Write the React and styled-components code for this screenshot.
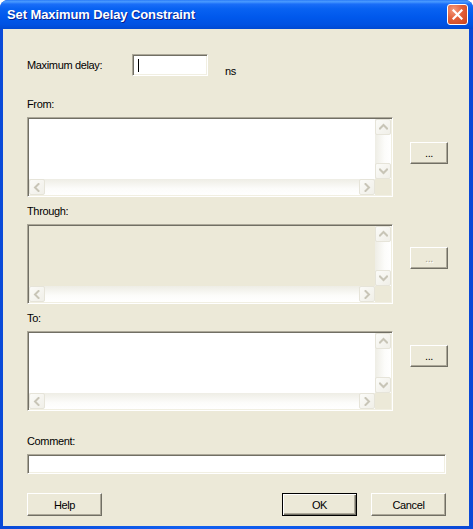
import React from 'react'
import styled, { createGlobalStyle, css } from 'styled-components'

const GlobalStyle = createGlobalStyle`
  html, body {
    margin: 0;
    padding: 0;
    background: #ffffff;
  }
  * {
    box-sizing: border-box;
  }
`

const font = css`
  font-family: 'Liberation Sans', Arial, sans-serif;
  font-size: 11px;
  letter-spacing: -0.35px;
  color: #000;
`

// Window frame
const Window = styled.div`
  width: 473px;
  height: 529px;
  display: flex;
  flex-direction: column;
  border-radius: 8px 8px 0 0;
  overflow: hidden;
  background: linear-gradient(to right, #0a4ad8, #1160f0 40%, #0e5aec 60%, #0a48d6);
`

const TitleBar = styled.div`
  height: 29px;
  flex: none;
  display: flex;
  align-items: center;
  justify-content: space-between;
  padding: 0 5px 1px 7px;
  background: linear-gradient(
    180deg,
    #2b7cf7 0%,
    #4a9bff 6%,
    #1a6ef8 14%,
    #0862f2 30%,
    #0058ec 60%,
    #0052e2 85%,
    #0049d2 100%
  );
`

const Title = styled.span`
  font-family: 'Liberation Sans', Arial, sans-serif;
  font-weight: bold;
  font-size: 13px;
  letter-spacing: -0.1px;
  color: #ffffff;
  text-shadow: 1px 1px 0 #0a1e8c;
`

const CloseButton = styled.div`
  width: 21px;
  height: 21px;
  border: 1px solid #ffffff;
  border-radius: 3px;
  background: radial-gradient(circle at 30% 25%, #f49a7c 0%, #e2603a 45%, #c9421c 100%);
  display: flex;
  align-items: center;
  justify-content: center;
`

const Body = styled.div`
  flex: 1;
  margin: 0 4px 3px 3px;
  background: #ece9d8;
  padding: 25px 21px 0 24px;
  display: flex;
  flex-direction: column;
`

// Fields
const sunken = css`
  border: 1px solid;
  border-color: #aca899 #ffffff #ffffff #aca899;
  box-shadow: inset 1px 1px 0 #716f64, inset -1px -1px 0 #f1efe2;
`

const DelayRow = styled.div`
  display: flex;
  align-items: center;
  height: 22px;
`

const Label = styled.div`
  ${font};
  line-height: 14px;
  height: 14px;
`

const DelayLabel = styled(Label)`
  width: 105px;
`

const TextField = styled.div`
  ${sunken};
  background: #ffffff;
  width: ${p => (p.$width ? `${p.$width}px` : 'auto')};
  height: ${p => p.$height}px;
  margin-right: ${p => p.$inset || 0}px;
  display: flex;
  align-items: center;
  padding-left: 5px;
`

const Caret = styled.span`
  width: 1px;
  height: 13px;
  background: #000;
`

const Units = styled(Label)`
  margin-left: 17px;
  align-self: flex-start;
  margin-top: 10px;
`

const Section = styled.div`
  margin-top: ${p => p.$top}px;
  display: flex;
  flex-direction: column;
  gap: 6px;
`

const ListRow = styled.div`
  display: flex;
  align-items: flex-start;
  gap: 17px;
`

const ListBox = styled.div`
  ${sunken};
  flex: 1;
  height: 80px;
  padding: 1px;
  display: grid;
  grid-template-columns: 1fr 16px;
  grid-template-rows: 1fr 16px;
`

const ListContent = styled.div`
  background: ${p => (p.$disabled ? '#ece9d8' : '#ffffff')};
`

const VScroll = styled.div`
  display: flex;
  flex-direction: column;
  justify-content: space-between;
  background: linear-gradient(to right, #eeede5, #fcfcfa 60%, #ffffff);
`

const HScroll = styled.div`
  display: flex;
  justify-content: space-between;
  background: linear-gradient(to bottom, #eeede5, #fcfcfa 60%, #ffffff);
`

const Corner = styled.div`
  background: #ece9d8;
`

const ScrollButton = styled.div`
  width: 16px;
  height: 16px;
  border: 1px solid #e6e4d9;
  border-radius: 2px;
  background: linear-gradient(135deg, #fbfbf8, #f0efe8);
  display: flex;
  align-items: center;
  justify-content: center;
`

const Button = styled.div`
  ${font};
  width: ${p => p.$width}px;
  height: ${p => p.$height}px;
  margin-top: ${p => p.$top || 0}px;
  flex: none;
  display: flex;
  align-items: center;
  justify-content: center;
  background: #ece9d8;
  color: ${p => (p.$disabled ? '#aca899' : '#000')};
  text-shadow: ${p => (p.$disabled ? '1px 1px 0 #ffffff' : 'none')};
  border: 1px solid;
  border-color: ${p => (p.$default ? '#000 #000 #000 #000' : '#ffffff #716f64 #716f64 #ffffff')};
  box-shadow: ${p =>
    p.$default
      ? 'inset 1px 1px 0 #ffffff, inset -1px -1px 0 #716f64, inset -2px -2px 0 #aca899'
      : 'inset -1px -1px 0 #aca899'};
`

const ButtonRow = styled.div`
  margin-top: 19px;
  margin-right: 2px;
  display: flex;
  gap: 14px;
`

const Spacer = styled.div`
  flex: 1;
`

const arrows = {
  up: '1,5.5 4.5,2 8,5.5',
  down: '1,2.5 4.5,6 8,2.5',
  left: '5.5,1 2,4.5 5.5,8',
  right: '2.5,1 6,4.5 2.5,8',
}

const Arrow = ({ dir }) => (
  <svg width="9" height="9" viewBox="0 0 9 9">
    <polyline points={arrows[dir]} fill="none" stroke="#c8c5b7" strokeWidth="2" strokeLinecap="square" />
  </svg>
)

const List = ({ disabled }) => (
  <ListBox>
    <ListContent $disabled={disabled} />
    <VScroll>
      <ScrollButton><Arrow dir="up" /></ScrollButton>
      <ScrollButton><Arrow dir="down" /></ScrollButton>
    </VScroll>
    <HScroll>
      <ScrollButton><Arrow dir="left" /></ScrollButton>
      <ScrollButton><Arrow dir="right" /></ScrollButton>
    </HScroll>
    <Corner />
  </ListBox>
)

const sections = [
  { label: 'From:', top: 21, button: 25 },
  { label: 'Through:', top: 7, button: 23, disabled: true },
  { label: 'To:', top: 7, button: 14 },
]

const App = () => (
  <>
    <GlobalStyle />
    <Window>
      <TitleBar>
        <Title>Set Maximum Delay Constraint</Title>
        <CloseButton>
          <svg width="11" height="11" viewBox="0 0 11 11">
            <path d="M1.5 1.5 L9.5 9.5 M9.5 1.5 L1.5 9.5" stroke="#ffffff" strokeWidth="2.2" strokeLinecap="square" />
          </svg>
        </CloseButton>
      </TitleBar>
      <Body>
        <DelayRow>
          <DelayLabel>Maximum delay:</DelayLabel>
          <TextField $width={76} $height={22}>
            <Caret />
          </TextField>
          <Units>ns</Units>
        </DelayRow>

        {sections.map(s => (
          <Section key={s.label} $top={s.top}>
            <Label>{s.label}</Label>
            <ListRow>
              <List disabled={s.disabled} />
              <Button $width={38} $height={22} $top={s.button} $disabled={s.disabled}>
                ...
              </Button>
            </ListRow>
          </Section>
        ))}

        <Section $top={23}>
          <Label>Comment:</Label>
          <TextField $height={20} $inset={2} />
        </Section>

        <ButtonRow>
          <Button $width={75} $height={23}>Help</Button>
          <Spacer />
          <Button $width={75} $height={23} $default>OK</Button>
          <Button $width={75} $height={23}>Cancel</Button>
        </ButtonRow>
      </Body>
    </Window>
  </>
)

export default App
